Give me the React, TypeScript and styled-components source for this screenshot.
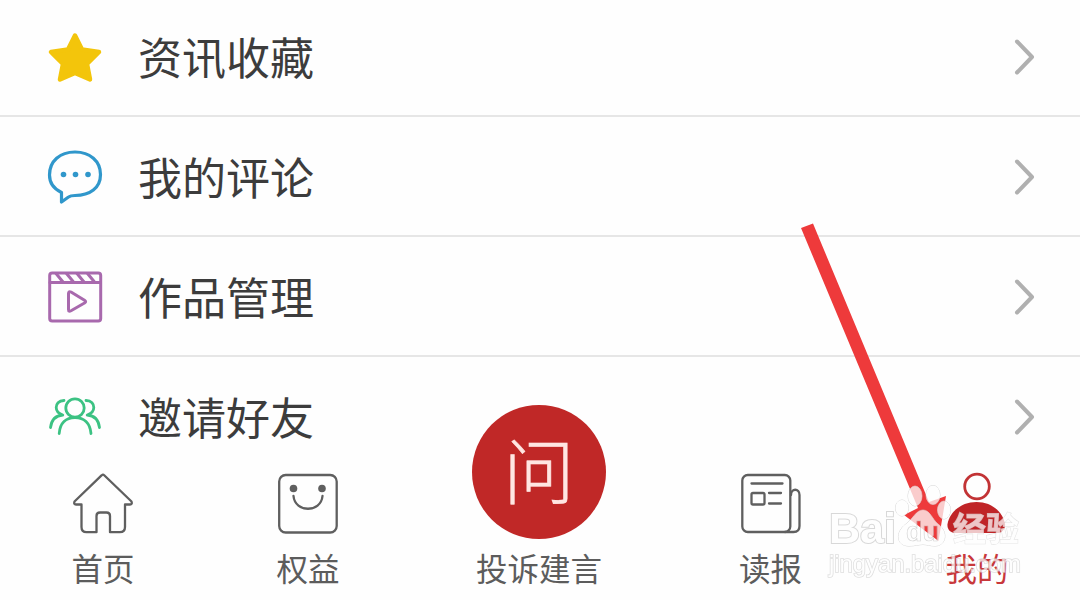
import React from "react";
import styled, { createGlobalStyle } from "styled-components";

const GlobalStyle = createGlobalStyle`
  * { box-sizing: border-box; }
  body { margin: 0; background: #fefefe; overflow: hidden; }
`;

const Screen = styled.div`
  position: relative;
  width: 1080px;
  height: 600px;
  overflow: hidden;
  display: flex;
  flex-direction: column;
  background: #fefefe;
  font-family: "Noto Sans CJK SC", sans-serif;
`;

const Menu = styled.ul`
  list-style: none;
  margin: -3px 0 0;
  padding: 0;
  flex: none;
`;

const MenuRow = styled.li<{ $last?: boolean }>`
  display: flex;
  align-items: center;
  height: 120px;
  padding: 2px 44px 0 47px;
  border-bottom: 2px solid ${(p) => (p.$last ? "transparent" : "#e6e6e6")};
`;

const MenuIcon = styled.svg`
  flex: none;
  width: 56px;
  height: 56px;
  fill: none;
  stroke-linecap: round;
  stroke-linejoin: round;
`;

const MenuLabel = styled.span`
  flex: 1;
  margin-left: 35px;
  padding-bottom: 2px;
  font-size: 44px;
  line-height: 60px;
  color: #3c3c3c;
`;

const Chevron = styled.svg`
  flex: none;
  width: 24px;
  height: 40px;
  fill: none;
  stroke: #b0b0b0;
  stroke-width: 4;
  stroke-linecap: round;
  stroke-linejoin: round;
`;

const TabBar = styled.nav`
  flex: none;
  display: grid;
  grid-template-columns: 206px 204px 258px 205px 208px;
  grid-template-rows: 131px;
  height: 131px;
  margin-top: -8px;
`;

const Tab = styled.div<{ $active?: boolean }>`
  display: flex;
  flex-direction: column;
  align-items: center;
  justify-content: flex-end;
  height: 131px;
  padding-bottom: 12px;
  color: ${(p) => (p.$active ? "#c8383b" : "#5c5c5c")};
`;

const TabIcon = styled.svg`
  flex: none;
  width: 64px;
  height: 64px;
  fill: none;
  stroke: #5f5f5f;
  stroke-width: 2.3;
  stroke-linecap: round;
  stroke-linejoin: round;
`;

const TabLabel = styled.span`
  margin-top: 11px;
  font-size: 31.5px;
  line-height: 42px;
  white-space: nowrap;
`;

const AskButton = styled.div`
  flex: none;
  display: flex;
  align-items: center;
  justify-content: center;
  width: 134px;
  height: 134px;
  margin-bottom: -4px;
  padding-bottom: 11px;
  border-radius: 50%;
  background: #c02827;
  color: #ffe6e2;
  font-size: 71px;
  font-weight: 300;
  line-height: 122px;
  -webkit-text-stroke: 0.6px #ffe6e2;
`;

const Arrow = styled.svg`
  position: absolute;
  left: 790px;
  top: 210px;
  width: 170px;
  height: 340px;
`;

const Watermark = styled.div`
  position: absolute;
  left: 829px;
  top: 482px;
  width: 200px;
  opacity: 0.74;
  color: #fff;
  font-family: "Liberation Sans", "Noto Sans CJK SC", sans-serif;
  -webkit-text-stroke: 2px #cccccc;
  paint-order: stroke fill;
`;

const WatermarkBrand = styled.div`
  display: flex;
  align-items: flex-end;
  height: 66px;
  font-weight: 700;
  white-space: nowrap;
`;

const BrandLatin = styled.span`
  width: 66px;
  font-size: 43px;
  line-height: 40px;
`;

const Paw = styled.svg`
  width: 58px;
  height: 66px;
  fill: #fff;
  stroke: #c8c8c8;
  stroke-width: 1;
  -webkit-text-stroke: 0;
`;

const BrandHan = styled.span`
  font-family: "Noto Sans CJK SC", sans-serif;
  font-size: 33px;
  line-height: 42px;
  -webkit-text-stroke: 1.2px #dcdcdc;
`;

const WatermarkSite = styled.div`
  font-size: 23.8px;
  line-height: 31px;
  white-space: nowrap;
  -webkit-text-stroke: 1.6px #d4d4d4;
`;

const StarIcon = () => (
  <MenuIcon viewBox="0 0 56 56">
    <path d="M28 6.5 L35 20.5 L52 23 L40 35 L43 50.5 L28 44 L13 50.5 L16 35 L4 23 L21 20.5 Z" fill="#f3c50b" stroke="#f3c50b" strokeWidth="4.5" />
  </MenuIcon>
);

const CommentIcon = () => (
  <MenuIcon viewBox="0 0 56 56" stroke="#3097cb" strokeWidth="3.2">
    <path d="M14.5 43.5 C6 39.5 2.5 33 2.5 26 C2.5 12 13 3 28 3 C43 3 53.5 12 53.5 25.5 C53.5 39 43 46.5 28 46.5 C25 46.5 23.5 46.5 21.5 48 L14.5 53 Z" />
    <g fill="#3097cb" stroke="none">
      <circle cx="16.5" cy="25.5" r="2.8" />
      <circle cx="28.5" cy="25.5" r="2.8" />
      <circle cx="41" cy="25.5" r="2.8" />
    </g>
  </MenuIcon>
);

const VideoIcon = () => (
  <MenuIcon viewBox="0 0 56 56" stroke="#a869ad" strokeWidth="3">
    <rect x="2.7" y="4" width="51" height="48" rx="2.5" />
    <path d="M3 13.5H53M9 4.5L16 13M19.5 4.5L26.5 13M30 4.5L37 13M40.5 4.5L47.5 13" />
    <path d="M21.5 24.5V40.5C21.5 42.5 22.5 42.5 24 41.7L37.5 34C39 33 39 32.3 37.5 31.3L24 23C22.5 22.3 21.5 22.5 21.5 24.5Z" />
  </MenuIcon>
);

const FriendsIcon = () => (
  <MenuIcon viewBox="0 0 56 56" stroke="#3cc283" strokeWidth="2.8">
    <circle cx="28" cy="19" r="9.2" />
    <path d="M12.2 44.5C13 34 19 28.6 28 28.6S43 34 44 44.5" />
    <path d="M17 11.5C11.5 11.5 9.2 15 9.2 18.5C9.2 22 11.5 24.5 15.8 26C9 26.5 4.5 31 3.5 38.5" />
    <path d="M39 11.5C44.5 11.5 46.8 15 46.8 18.5C46.8 22 44.5 24.5 40.2 26C47 26.5 51.5 31 52.5 38.5" />
  </MenuIcon>
);

const HomeIcon = () => (
  <TabIcon viewBox="0 0 64 64">
    <path d="M30.8 4.2Q32 3 33.2 4.2L60.5 30.5Q61.5 33.5 59 33.5H54V56Q54 61.2 48.8 61.2H39V45Q39 41.5 35.5 41.5H29Q25.5 41.5 25.5 45V61.2H15.5Q10.5 61.2 10.5 56V33.5H5Q2.5 33.5 3.5 30.5Z" />
  </TabIcon>
);

const BagIcon = () => (
  <TabIcon viewBox="0 0 64 64">
    <rect x="3.2" y="4" width="57.5" height="57.5" rx="6.5" />
    <path d="M17.5 25C19 42 45 42 46.5 25" />
    <g fill="#5f5f5f" stroke="none">
      <circle cx="17.5" cy="17.5" r="3.8" />
      <circle cx="46" cy="17.5" r="3.8" />
    </g>
  </TabIcon>
);

const NewsIcon = () => (
  <TabIcon viewBox="0 0 64 64">
    <rect x="3.3" y="4" width="48" height="57" rx="5.5" />
    <path d="M52 24C52 17 60.5 17 60.5 24V55Q60.5 61 54.5 61H46" />
    <path d="M12.5 12.5H43.5M30 22H42M30 32.5H42" />
    <rect x="12.5" y="22" width="13" height="11.5" rx="1.5" />
  </TabIcon>
);

const ProfileIcon = () => (
  <TabIcon viewBox="0 0 64 64">
    <circle cx="32" cy="15.5" r="12.3" stroke="#c23335" strokeWidth="2.8" />
    <path d="M31.500 31C46 31 57.500 40 60 53C60.500 58 57 62 52 62H10C5 62 2 58 2.500 53C5 40 17 31 31.500 31Z" fill="#c02427" stroke="none" />
  </TabIcon>
);

const rows = [
  { label: "资讯收藏", Icon: StarIcon },
  { label: "我的评论", Icon: CommentIcon },
  { label: "作品管理", Icon: VideoIcon },
  { label: "邀请好友", Icon: FriendsIcon },
];

export default function App() {
  return (
    <Screen>
      <GlobalStyle />
      <Menu>
        {rows.map(({ label, Icon }, i) => (
          <MenuRow key={label} $last={i === rows.length - 1}>
            <Icon />
            <MenuLabel>{label}</MenuLabel>
            <Chevron viewBox="0 0 24 40">
              <path d="M5 4.5L20 20L5 35.5" />
            </Chevron>
          </MenuRow>
        ))}
      </Menu>
      <TabBar>
        <Tab><HomeIcon /><TabLabel>首页</TabLabel></Tab>
        <Tab><BagIcon /><TabLabel>权益</TabLabel></Tab>
        <Tab><AskButton>问</AskButton><TabLabel>投诉建言</TabLabel></Tab>
        <Tab><NewsIcon /><TabLabel>读报</TabLabel></Tab>
        <Tab $active><ProfileIcon /><TabLabel>我的</TabLabel></Tab>
      </TabBar>
      <Arrow viewBox="790 210 170 340">
        <path d="M801 228L813 223.5L929 502L946 496L938.5 541L904 515L918 508Z" fill="#ee3a3b" />
      </Arrow>
      <Watermark>
        <WatermarkBrand>
          <BrandLatin>Bai</BrandLatin>
          <Paw viewBox="0 0 58 66">
            <mask id="du">
              <rect width="58" height="66" fill="#fff" stroke="none" />
              <text x="11" y="59" fontSize="27" fill="#000" stroke="none">du</text>
            </mask>
            <ellipse cx="7" cy="26" rx="6.5" ry="8" />
            <ellipse cx="20" cy="14" rx="7" ry="10" />
            <ellipse cx="38" cy="13" rx="7" ry="9.5" />
            <ellipse cx="49" cy="28" rx="6.5" ry="9" />
            <path mask="url(#du)" d="M28 28C35 28 37 37 43 42C54 50 51 64 40 64C35 64 32 62.5 28 62.5S20 64 14 64C1 64 0 50 11 42C18 37 21 28 28 28Z" />
            <text x="11" y="59" fontSize="27" fill="none" strokeWidth="0.7">du</text>
          </Paw>
          <BrandHan>经验</BrandHan>
        </WatermarkBrand>
        <WatermarkSite>jingyan.baidu.com</WatermarkSite>
      </Watermark>
    </Screen>
  );
}
